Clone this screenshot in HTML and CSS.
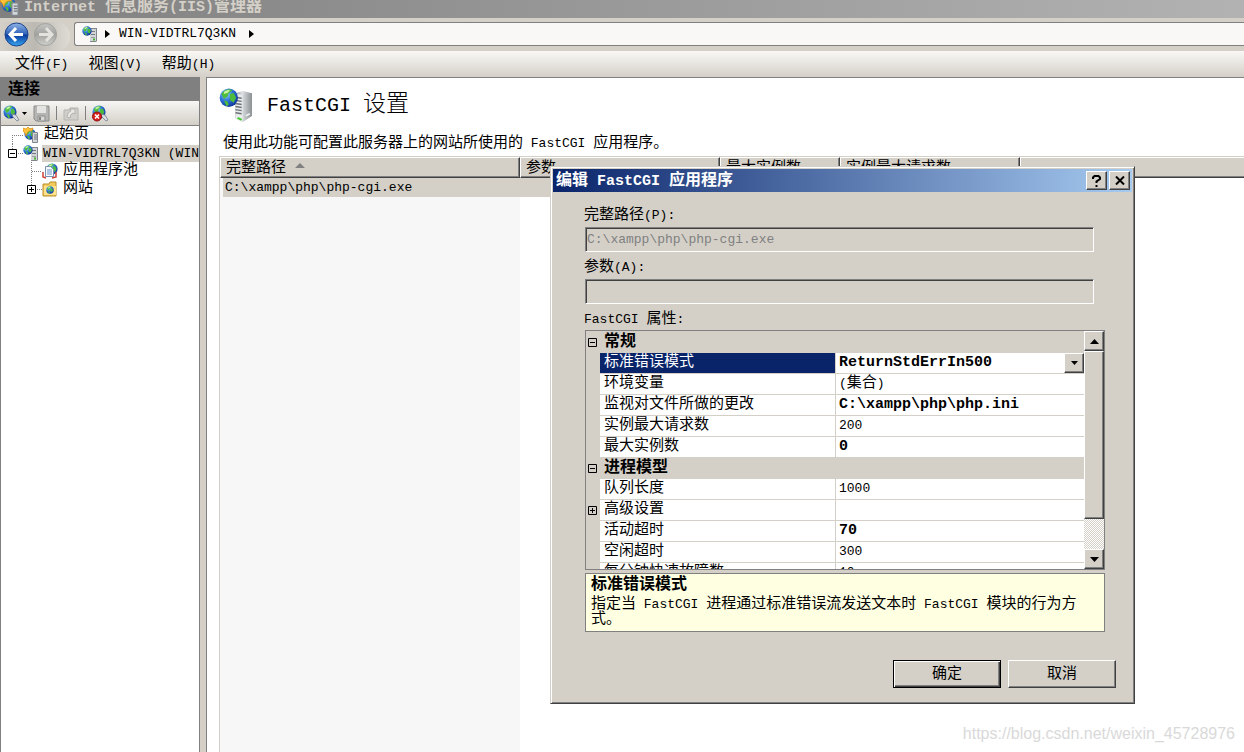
FILE: index.html
```html
<!DOCTYPE html>
<html lang="zh-CN">
<head>
<meta charset="utf-8">
<title>Internet 信息服务(IIS)管理器</title>
<link rel="stylesheet" href="styles.css">
</head>
<body>
<svg class="defs" aria-hidden="true">
  <defs>
    <radialGradient id="ball" cx=".35" cy=".3" r=".8"><stop offset="0" stop-color="#9fd8ff"/><stop offset=".45" stop-color="#2f78d8"/><stop offset="1" stop-color="#0a2a90"/></radialGradient>
    <linearGradient id="metal"><stop offset="0" stop-color="#8d9399"/><stop offset=".4" stop-color="#dfe3e6"/><stop offset="1" stop-color="#8c9298"/></linearGradient>
    <linearGradient id="side"><stop offset="0" stop-color="#d5d8da"/><stop offset="1" stop-color="#8b9093"/></linearGradient>
    <linearGradient id="blueBtn" x2="0" y2="1"><stop offset="0" stop-color="#8fb4e8"/><stop offset=".48" stop-color="#2f62b8"/><stop offset=".52" stop-color="#0a3a9c"/><stop offset="1" stop-color="#38a8f0"/></linearGradient>
    <linearGradient id="greyBtn" x2="0" y2="1"><stop offset="0" stop-color="#c4c4c2"/><stop offset=".5" stop-color="#a2a2a0"/><stop offset="1" stop-color="#cfcfcb"/></linearGradient>
    <symbol id="globe" viewBox="0 0 16 16">
      <circle cx="8" cy="8" r="7.5" fill="url(#ball)"/>
      <path d="M2 5q2-4 7-4l2 1-3 2-1 3-3 2zM9 5l3-1 2 4-2 4-3-2zM4 10l3 1 1 3-2 1z" fill="#4dbb3c"/>
      <path d="M4 3q3-2 5-1l-2 2-3 1z" fill="#c9f5a0"/>
    </symbol>
    <symbol id="server" viewBox="0 0 32 34">
      <path d="M16 5l7-2 9 2v22l-9 6-7-4z" fill="url(#metal)"/>
      <path d="M16 5l7 2v26l-7-3z" fill="#e9eaeb"/>
      <path d="M23 7l9-2v22l-9 6z" fill="url(#side)"/>
      <path d="M16 9l6 1M16 12l6 1M16 15l6 1M16 18l6 1M16 21l6 1M16 24l6 1" stroke="#6c7278" stroke-width="1.4"/>
      <path d="M18 29l4 2" stroke="#44cc30" stroke-width="2"/>
      <path d="M26 27l4-2" stroke="#eef1f2" stroke-width="1.5"/>
      <use href="#globe" x="0" y="0" width="19" height="19"/>
    </symbol>
    <symbol id="serversmall" viewBox="0 0 16 16">
      <path d="M8 3l1-1h6v13l-1 1H8z" fill="#80868c"/>
      <path d="M8 3h6v12H8z" fill="#d3d6d9"/>
      <path d="M9 5.500h4M9 8.500h4" stroke="#737980"/>
      <path d="M9 11.500h4" stroke="#9a9fa4"/>
      <path d="M11 13.500h2" stroke="#45b52f" stroke-width="2"/>
      <use href="#globe" x="0" y="0" width="10" height="10"/>
    </symbol>
    <symbol id="start" viewBox="0 0 16 16">
      <use href="#globe" x="1" y="1" width="12" height="12"/>
      <path d="M9.500 5.500h5v10h-5z" fill="#d3d6d9" stroke="#7f858c"/>
      <path d="M11 8h3M11 10h3M11 12h3" stroke="#70767c"/>
      <path d="M0 1l3 1 2-2 2 2 3-1-1 3-3 0-2 2-1 3-1-3-2-2z" fill="#ffc13a" stroke="#d98a10" stroke-width=".7"/>
    </symbol>
    <symbol id="connect" viewBox="0 0 17 17">
      <use href="#globe" x="0" y="0" width="14" height="14"/>
      <path d="M9 9l1 3 4 4 2-1-3-5z" fill="#d9dde2" stroke="#70808f" stroke-width=".8"/>
    </symbol>
    <symbol id="plus" viewBox="0 0 9 9"><path d="M.5.5h8v8h-8z" fill="none" stroke="#000"/><path d="M2 4.5h5M4.5 2v5" stroke="#000"/></symbol>
    <symbol id="minus" viewBox="0 0 9 9"><path d="M.5.5h8v8h-8z" fill="none" stroke="#000"/><path d="M2 4.5h5" stroke="#000"/></symbol>
  </defs>
</svg>

<div class="app">
  <header class="titlebar">
    <svg class="i20" aria-hidden="true"><use href="#start"/></svg>
    <span class="titletext">Internet <span class="zb">信息服务</span>(IIS)<span class="zb">管理器</span></span>
  </header>

  <div class="navbar">
    <div class="navbtns">
      <button class="round" aria-label="后退"><svg width="25" height="25" viewBox="0 0 25 25"><circle cx="12.500" cy="12.500" r="11.500" fill="url(#blueBtn)" stroke="#1c438c"/><path d="M12 6l-6 6.500 6 6.500M7 12.500h12" fill="none" stroke="#fff" stroke-width="3"/></svg></button>
      <button class="round" aria-label="前进"><svg width="25" height="25" viewBox="0 0 25 25"><circle cx="12.500" cy="12.500" r="11" fill="url(#greyBtn)" stroke="#a0a09c"/><path d="M13 6l6 6.500-6 6.500M18 12.500H6" fill="none" stroke="#e4e2dd" stroke-width="3"/></svg></button>
    </div>
    <nav class="address">
      <svg class="i16" aria-hidden="true"><use href="#serversmall"/></svg>
      <svg width="5" height="8"><path d="M0 0l5 4-5 4z"/></svg>
      <span class="lat">WIN-VIDTRL7Q3KN</span>
      <svg width="5" height="8"><path d="M0 0l5 4-5 4z"/></svg>
    </nav>
  </div>

  <div class="menubar">
    <button class="menu">文件<span class="lat">(F)</span></button>
    <button class="menu">视图<span class="lat">(V)</span></button>
    <button class="menu">帮助<span class="lat">(H)</span></button>
  </div>

  <div class="workspace">
    <aside class="side">
      <h2 class="sidehead">连接</h2>
      <div class="tools">
        <button class="tool drop" aria-label="连接"><svg width="17" height="17"><use href="#connect"/></svg><svg width="5" height="3"><path d="M0 0h5L2.500 3z"/></svg></button>
        <button class="tool" aria-label="保存"><svg width="17" height="17" viewBox="0 0 17 17"><path d="M1 1h15v15H3l-2-2z" fill="#b5b5b3" stroke="#8c8c8a"/><path d="M4 1h9v7H4z" fill="#e4e4e2"/><path d="M5 11h7v5H5z" fill="#d8d8d6" stroke="#8c8c8a"/><path d="M6 12h2v3H6z" fill="#858583"/></svg></button>
        <i class="sep"></i>
        <button class="tool" aria-label="向上"><svg width="16" height="16" viewBox="0 0 16 16"><path d="M1 5h5l1-2h8v12H1z" fill="#d0cfcc" stroke="#b5b4b0"/><path d="M4 12q0-5 4-6l-1-2 5 0 0 5-2-1q-3 1-3 5z" fill="#e9e8e5" stroke="#a9a8a5" stroke-width=".8"/></svg></button>
        <i class="sep"></i>
        <button class="tool" aria-label="断开"><svg width="17" height="17" viewBox="0 0 17 17"><use href="#connect"/><circle cx="5" cy="11.500" r="4.500" fill="#d82020" stroke="#8f1010"/><path d="M3 9.500l4 4m0-4l-4 4" stroke="#fff" stroke-width="1.600"/></svg></button>
      </div>
      <ul class="tree">
        <li><svg width="23" height="18"><path class="dots" d="M12.500 9v9M12 9.500h11"/></svg><svg class="i16"><use href="#start"/></svg><span class="node">起始页</span></li>
        <li><svg width="23" height="18"><path class="dots" d="M12.500 0v5M18 9.500h5"/><use href="#minus" x="8" y="5" width="9" height="9"/></svg><svg class="i16"><use href="#serversmall"/></svg><span class="node picked lat">WIN-VIDTRL7Q3KN (WIN-VIDTRL7Q3KN\Administrator)</span></li>
        <li><svg width="42" height="18"><path class="dots" d="M31.500 0v18M32 9.500h10"/></svg><svg class="i16" viewBox="0 0 16 16"><use href="#globe" x="4" y="0" width="12" height="12"/><path d="M3.500 3.500h5l3 3v7h-8z" fill="#f6f8fb" stroke="#7890b4"/><path d="M5 7h5M5 9h5M5 11h5" stroke="#6c94cc"/><path d="M1 9v5l3 1M14 9v5l-4 1" fill="none" stroke="#d04038" stroke-width="1.500"/></svg><span class="node">应用程序池</span></li>
        <li><svg width="42" height="18"><path class="dots" d="M31.500 0v5M37 9.500h5"/><use href="#plus" x="27" y="5" width="9" height="9"/></svg><svg class="i16" viewBox="0 0 16 16"><path d="M1 3h6l1-2h6v14H1z" fill="#f3ca5c" stroke="#b98e28"/><path d="M2 5h12v9H2z" fill="#ffe38c"/><use href="#globe" x="4" y="5" width="8" height="8"/></svg><span class="node">网站</span></li>
      </ul>
    </aside>

    <main class="content">
      <div class="heading">
        <svg width="33" height="35" aria-hidden="true"><use href="#server"/></svg>
        <h1>FastCGI <span class="zh">设置</span></h1>
      </div>
      <p class="intro">使用此功能可配置此服务器上的网站所使用的<span class="lat"> FastCGI </span>应用程序。</p>
      <div class="list">
        <table class="listtable">
          <colgroup><col class="c1"><col class="c2"><col class="c3"><col class="c4"><col></colgroup>
          <thead><tr><th>完整路径 <svg class="sort" width="10" height="5"><path d="M5 0l5 5H0z"/></svg></th><th>参数</th><th>最大实例数</th><th>实例最大请求数</th><th></th></tr></thead>
          <tbody><tr><td class="first"><span class="lat">C:\xampp\php\php-cgi.exe</span></td><td></td><td></td><td></td><td class="rest"></td></tr></tbody>
        </table>
        <div class="sorted"></div>
      </div>
    </main>
  </div>

  <section class="dialog" role="dialog" aria-labelledby="dlg">
    <header class="dlghead">
      <h2 id="dlg"><span class="zb">编辑</span> FastCGI <span class="zb">应用程序</span></h2>
      <button class="cap" aria-label="帮助"><svg width="9" height="12" viewBox="0 0 9 12"><path d="M1 4V2.500L2.500 1h4L8 2.500V4L4.500 6.500V8M4.500 10v2" fill="none" stroke="#000" stroke-width="2"/></svg></button>
      <button class="cap" aria-label="关闭"><svg width="10" height="9" viewBox="0 0 10 9"><path d="M1 .5l8 8M9 .5l-8 8" stroke="#000" stroke-width="2"/></svg></button>
    </header>
    <form class="dlgbody">
      <label for="path">完整路径<span class="lat">(P):</span></label>
      <input id="path" class="field" type="text" value="C:\xampp\php\php-cgi.exe" disabled>
      <label for="args">参数<span class="lat">(A):</span></label>
      <input id="args" class="field" type="text" disabled>
      <div class="caption"><span class="lat">FastCGI </span>属性<span class="lat">:</span></div>
      <div class="props">
        <div class="viewport">
          <table class="grid">
            <colgroup><col class="gut"><col class="name"><col></colgroup>
            <tbody>
              <tr class="group"><td><svg width="9" height="9"><use href="#minus"/></svg></td><th colspan="2">常规</th></tr>
              <tr class="active"><td></td><th><label for="mode">标准错误模式</label></th><td><div class="combo"><select id="mode"><option>ReturnStdErrIn500</option></select><span class="arrow"><svg width="7" height="4"><path d="M0 0h7L3.500 4z"/></svg></span></div></td></tr>
              <tr><td></td><th>环境变量</th><td><span class="lat">(</span>集合<span class="lat">)</span></td></tr>
              <tr><td></td><th>监视对文件所做的更改</th><td><b>C:\xampp\php\php.ini</b></td></tr>
              <tr><td></td><th>实例最大请求数</th><td><span class="lat">200</span></td></tr>
              <tr><td></td><th>最大实例数</th><td><b>0</b></td></tr>
              <tr class="group"><td><svg width="9" height="9"><use href="#minus"/></svg></td><th colspan="2">进程模型</th></tr>
              <tr><td></td><th>队列长度</th><td><span class="lat">1000</span></td></tr>
              <tr><td><svg width="9" height="9"><use href="#plus"/></svg></td><th>高级设置</th><td></td></tr>
              <tr><td></td><th>活动超时</th><td><b>70</b></td></tr>
              <tr><td></td><th>空闲超时</th><td><span class="lat">300</span></td></tr>
              <tr><td></td><th>每分钟快速故障数</th><td><span class="lat">10</span></td></tr>
            </tbody>
          </table>
        </div>
        <div class="scroll">
          <button type="button" class="sbtn" aria-label="上"><svg width="9" height="5"><path d="M4.500 0L9 5H0z"/></svg></button>
          <div class="thumb"></div>
          <div class="track"></div>
          <button type="button" class="sbtn" aria-label="下"><svg width="9" height="5"><path d="M0 0h9L4.500 5z"/></svg></button>
        </div>
      </div>
      <div class="help">
        <h3>标准错误模式</h3>
        <p>指定当<span class="lat"> FastCGI </span>进程通过标准错误流发送文本时<span class="lat"> FastCGI </span>模块的行为方式。</p>
      </div>
      <div class="actions">
        <button type="button" class="btn default">确定</button>
        <button type="button" class="btn">取消</button>
      </div>
    </form>
  </section>
  <div class="watermark">https://blog.csdn.net/weixin_45728976</div>
</div>
</body>
</html>
```
FILE: styles.css
```css
* { box-sizing: border-box; }
html, body { height: 100%; margin: 0; }
body { background: #d4d0c8; color: #000; font: 15px/20px "Liberation Mono", "Noto Sans CJK SC", monospace; overflow: hidden; }
h1, h2, h3, p, ul { margin: 0; padding: 0; }
button, input, select { font: inherit; color: inherit; border: 0; padding: 0; margin: 0; background: none; border-radius: 0; }
svg { display: block; flex: none; }
.defs { position: absolute; width: 0; height: 0; }
.lat { font-size: 13px; line-height: 0; white-space: pre-wrap; }
.zb { font-size: 16px; line-height: 0; }
.i16 { width: 16px; height: 16px; }
.i20 { width: 20px; height: 20px; }

.app { position: relative; height: 100%; display: flex; flex-direction: column; overflow: hidden; }

.titlebar { flex: none; display: flex; align-items: flex-end; gap: 4px; height: 18px; padding-bottom: 2px; background: linear-gradient(90deg, #808080, #b2b2b2); color: #d4d0c8; font-weight: bold; }
.titletext { line-height: 16px; }

.navbar { flex: none; display: flex; height: 33px; padding-top: 4px; gap: 4px; }
.navbtns { width: 70px; height: 29px; display: flex; gap: 4px; padding-left: 4px; border-radius: 0 14px 14px 0; background: linear-gradient(90deg, #d4d0c8, #bcb9b2 50%, #dedbd5); }
.round { width: 25px; height: 25px; }
.address { flex: 1; display: flex; align-items: center; height: 24px; padding-left: 7px; gap: 7px; background: #f9f8f6; border: 1px solid #808080; border-right: 0; border-radius: 3px 0 0 3px; }
.address .lat { line-height: 22px; padding: 0 6px 0 2px; }

.menubar { flex: none; display: flex; align-items: center; gap: 20px; height: 26px; padding: 2px 0 0 15px; background: linear-gradient(#f9f8f6, #d4d0c8); }

.workspace { flex: 1; min-height: 0; display: flex; gap: 6px; }
.side { flex: none; width: 200px; display: flex; flex-direction: column; background: #fff; border-right: 1px solid #808080; border-left: 1px solid #808080; overflow: hidden; }
.sidehead { height: 24px; padding-left: 7px; background: #808080; font-size: 16px; line-height: 27px; }
.tools { display: flex; align-items: center; gap: 6px; height: 25px; padding-left: 2px; background: linear-gradient(#f7f6f4, #d4d0c8); border-bottom: 1px solid #808080; }
.drop { display: flex; align-items: center; gap: 2px; }
.sep { width: 1px; height: 14px; background: #808080; }
.tree { list-style: none; }
.tree li { display: flex; align-items: center; height: 18px; white-space: nowrap; margin-left: -1px; }
.node { padding: 0 4px 0 5px; line-height: 18px; }
.node.picked { line-height: 17px; margin-left: 3px; padding-left: 1px; background: #d4d0c8; white-space: pre; }
.dots { stroke: #808080; stroke-dasharray: 1 1; fill: none; }

.content { flex: 1; min-width: 0; display: flex; flex-direction: column; background: #fff; border-top: 1px solid #808080; border-left: 1px solid #808080; }
.heading { display: flex; align-items: center; gap: 15px; padding: 10px 0 0 12px; }
.heading h1 { font-size: 20px; font-weight: normal; line-height: 30px; }
.heading .zh { font-size: 23px; line-height: 0; font-weight: 300; }
.intro { padding: 11px 0 2px 16px; }
.list { flex: 1; display: flex; flex-direction: column; margin-left: 12px; border-left: 1px solid #d4d0c8; border-top: 1px solid #d4d0c8; }
.listtable { width: 100%; table-layout: fixed; border-collapse: separate; border-spacing: 0; }
.c1 { width: 300px; }
.c2 { width: 200px; }
.c3 { width: 120px; }
.c4 { width: 180px; }
.listtable th { height: 21px; padding: 2px 0 0 5px; line-height: 17px; text-align: left; font-weight: normal; background: #d4d0c8; border: 1px solid #fff; border-right-color: #404040; border-bottom-color: #404040; box-shadow: inset -1px -1px #808080; }
.listtable th:last-child { border-right: 0; box-shadow: inset 0 -1px #808080; }
.listtable td { height: 19px; padding: 1px 0 0; line-height: 18px; background: #d4d0c8; }
.listtable .first { padding-left: 2px; border-left: 3px solid #f7f7f7; }
.listtable .rest { background: #fff; }
.sort { display: inline-block; vertical-align: 4px; fill: #808080; }
.sorted { flex: 1; width: 300px; background: #f7f7f7; }

.dialog { position: absolute; left: 550px; top: 166px; width: 585px; padding: 2px; background: #d4d0c8; border: 1px solid; border-color: #d4d0c8 #404040 #404040 #d4d0c8; box-shadow: inset 1px 1px #fff, inset -1px -1px #808080; }
.dlghead { display: flex; align-items: center; gap: 2px; height: 23px; padding: 0 2px 0 3px; background: linear-gradient(90deg, #0a246a, #a6caf0); }
.dlghead h2 { flex: 1; color: #fff; font-size: 15px; line-height: 22px; padding-top: 2px; }
.cap, .sbtn, .thumb, .arrow, .btn { background: #d4d0c8; border: 1px solid; border-color: #fff #404040 #404040 #fff; box-shadow: inset -1px -1px #808080; display: flex; align-items: center; justify-content: center; }
.cap { width: 21px; height: 19px; }
.dlgbody { display: flex; flex-direction: column; padding: 12px 27px 13px 32px; }
.dlgbody > label { height: 23px; line-height: 23px; margin-left: -1px; }
.field { width: 509px; height: 25px; margin-bottom: 4px; padding: 0 2px 0 1px; font-size: 13px; color: #808080; background: #d4d0c8; border: 1px solid; border-color: #808080 #fff #fff #808080; box-shadow: inset 1px 1px #404040; }
.caption { height: 22px; line-height: 23px; margin-left: -1px; }
.props { display: flex; height: 240px; border: 1px solid #808080; }
.viewport { flex: 1; overflow: hidden; padding-top: 1px; }
.grid { width: 100%; table-layout: fixed; border-collapse: separate; border-spacing: 0; }
.gut { width: 14px; }
.name { width: 236px; }
.grid tr { height: 21px; }
.grid th, .grid td { height: 21px; padding: 0 0 0 3px; line-height: 20px; text-align: left; font-weight: normal; background: #fff; border-bottom: 1px solid #d4d0c8; white-space: nowrap; }
.grid th { border-right: 1px solid #d4d0c8; padding-left: 4px; }
.grid td:first-child, .grid .group th { background: #d4d0c8; }
.grid td:first-child { padding-left: 2px; }
.grid .group th { font-weight: bold; font-size: 16px; line-height: 18px; }
.grid .active th { color: #fff; background: #0a246a; }
.combo { display: flex; height: 20px; }
.combo select { flex: 1; min-width: 0; appearance: none; font-weight: bold; line-height: 20px; }
.arrow { width: 20px; height: 20px; }
.scroll { width: 20px; display: flex; flex-direction: column; }
.sbtn { flex: none; width: 20px; height: 20px; }
.thumb { height: 168px; }
.track { flex: 1; background: repeating-conic-gradient(#fff 0 25%, #d4d0c8 0 50%) 0 0 / 2px 2px; }
.help { height: 59px; margin-top: 3px; padding: 1px 18px 0 5px; background: #ffffe1; border: 1px solid #808080; }
.help h3 { font-size: 16px; line-height: 20px; }
.help p { padding-top: 2px; line-height: 15px; }
.actions { display: flex; justify-content: flex-end; gap: 7px; margin-top: 28px; margin-right: -11px; }
.btn { width: 108px; height: 28px; padding-top: 2px; }
.btn.default { border-color: #000; box-shadow: inset 1px 1px #fff, inset -1px -1px #404040, inset -2px -2px #808080; }
.watermark { position: absolute; right: 9px; bottom: 8px; color: #d9d9d9; font: 16px/20px "Liberation Sans", Arial, sans-serif; }
```
